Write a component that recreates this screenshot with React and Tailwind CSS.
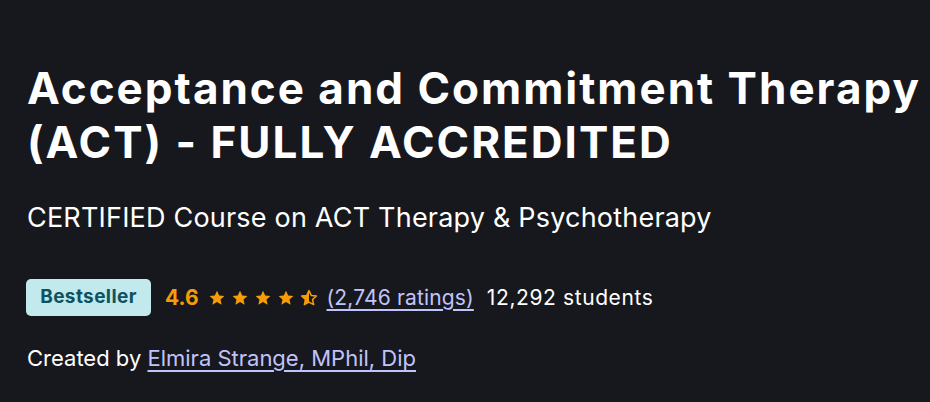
import React from 'react';

const STAR = 'M12 2.2l2.95 6.35 6.95.75-5.2 4.7 1.5 6.85L12 17.4l-6.2 3.45 1.5-6.85-5.2-4.7 6.95-.75z';

const Star = ({ half = false }) => (
  <svg viewBox="0 0 24 24" className="w-[18px] h-[18px]" aria-hidden="true">
    {half ? (
      <>
        <defs>
          <clipPath id="half-left">
            <rect x="0" y="0" width="12" height="24" />
          </clipPath>
        </defs>
        <path d={STAR} fill="none" stroke="#f69c08" strokeWidth="2" strokeLinejoin="round" />
        <path d={STAR} fill="#f69c08" clipPath="url(#half-left)" />
      </>
    ) : (
      <path d={STAR} fill="#f69c08" />
    )}
  </svg>
);

const App = () => {
  return (
    <div className="min-h-screen w-full bg-[#17181d] text-white font-['Inter','Liberation_Sans',sans-serif]">
      <div className="pl-[27px] pr-2 pt-[61px] flex flex-col">
        {/* Title */}
        <h1 className="text-[44px] leading-[54px] font-bold tracking-[2px] whitespace-nowrap">
          Acceptance and Commitment Therapy
          <br />
          (ACT) - FULLY ACCREDITED
        </h1>

        {/* Subtitle */}
        <p className="mt-[32px] text-[27px] leading-[34px] tracking-[0.2px]">
          CERTIFIED Course on ACT Therapy &amp; Psychotherapy
        </p>

        {/* Rating row */}
        <div className="mt-[44px] flex items-center">
          <span className="h-[37px] w-[125px] -ml-[1px] flex items-center justify-center rounded-[5px] bg-[#c2e9eb] text-[#0d5261] text-[19px] font-bold tracking-[0.4px]">
            Bestseller
          </span>
          <span className="ml-[14px] text-[#f69c08] text-[21px] font-bold">4.6</span>
          <div className="ml-[9px] flex items-center gap-[5px]">
            <Star />
            <Star />
            <Star />
            <Star />
            <Star half />
          </div>
          <a href="#" className="ml-[9px] text-[21px] tracking-[0.15px] text-[#c0c4fc] underline underline-offset-[4px]">
            (2,746 ratings)
          </a>
          <span className="ml-[13px] text-[21px] tracking-[0.6px]">12,292 students</span>
        </div>

        {/* Instructor */}
        <p className="mt-[27px] text-[22px] leading-[30px]">
          Created by{' '}
          <a href="#" className="text-[#c0c4fc] underline underline-offset-[4px]">
            Elmira Strange, MPhil, Dip
          </a>
        </p>
      </div>
    </div>
  );
};

export default App;
